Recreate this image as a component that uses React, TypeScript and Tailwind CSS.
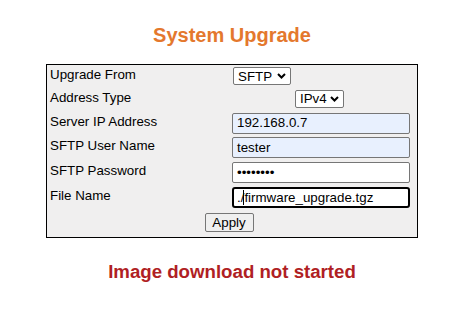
import React from 'react';

const font = { fontFamily: '"Liberation Sans", Arial, sans-serif' };

function Chevron() {
    return (
        <svg width="9" height="6" viewBox="0 0 9 6" className="shrink-0">
            <path d="M1 1 L4.5 4.5 L8 1" fill="none" stroke="#000" strokeWidth="2" />
        </svg>
    );
}

function FakeSelect({ value, width }: { value: string; width: string }) {
    return (
        <div
            className={`${width} h-[18px] flex items-center justify-between pl-[4px] pr-[4px] bg-white border border-[#767676] rounded-[2px] text-[13.33px] text-black`}
        >
            <span>{value}</span>
            <Chevron />
        </div>
    );
}

function Field({ value, autofill, focused, caret }: { value: string; autofill?: boolean; focused?: boolean; caret?: boolean }) {
    const base = 'w-[178px] h-[21px] flex items-center text-[13.33px] text-black';
    if (focused) {
        return (
            <div className={`${base} border-2 border-black rounded-[3px] bg-white pl-[3px]`}>
                <span>./</span>
                {caret && <span className="inline-block w-[1px] h-[15px] bg-black -ml-[1px]" />}
                <span>{value}</span>
            </div>
        );
    }
    return (
        <div
            className={`${base} border border-[#767676] rounded-[2px] pl-[4px] ${autofill ? 'bg-[#e8f0fe]' : 'bg-white'}`}
        >
            {value}
        </div>
    );
}

function Row({ label, h, children }: { label: string; h: string; children: React.ReactNode }) {
    return (
        <div className={`grid grid-cols-[185px_179px] ${h}`}>
            <div className="flex items-center pl-[3px] pb-[3px] text-[13.33px] text-black">{label}</div>
            <div className="flex items-center">{children}</div>
        </div>
    );
}

export default function App() {
    return (
        <div className="w-[473px] h-[335px] bg-white overflow-hidden" style={font}>
            <div className="w-[372px] ml-[46px] flex flex-col">
                <h1 className="mt-[24px] text-center text-[20px] leading-[23px] font-bold text-[#e4782d]">
                    System Upgrade
                </h1>
                <div className="mt-[17px] border border-black bg-[#f0efef] pr-[6px] pb-[2px]">
                    <Row label="Upgrade From" h="h-[22px]">
                        <div className="ml-[1px]">
                            <FakeSelect value="SFTP" width="w-[58px]" />
                        </div>
                    </Row>
                    <Row label="Address Type" h="h-[24px]">
                        <div className="w-full flex justify-center pr-[4px]">
                            <FakeSelect value="IPv4" width="w-[49px]" />
                        </div>
                    </Row>
                    <Row label="Server IP Address" h="h-[24px]">
                        <Field value="192.168.0.7" autofill />
                    </Row>
                    <Row label="SFTP User Name" h="h-[25px]">
                        <Field value="tester" autofill />
                    </Row>
                    <Row label="SFTP Password" h="h-[25px]">
                        <Field value="••••••••" />
                    </Row>
                    <Row label="File Name" h="h-[25px]">
                        <Field value="firmware_upgrade.tgz" focused caret />
                    </Row>
                    <div className="w-[364px] h-[25px] flex items-center justify-center">
                        <button className="w-[49px] h-[19px] bg-[#efefef] border border-[#767676] rounded-[2px] text-[13.33px] text-black leading-none">
                            Apply
                        </button>
                    </div>
                </div>
                <p className="mt-[23px] text-center text-[18.67px] leading-[21px] font-bold text-[#b01f24]">
                    Image download not started
                </p>
            </div>
        </div>
    );
}
